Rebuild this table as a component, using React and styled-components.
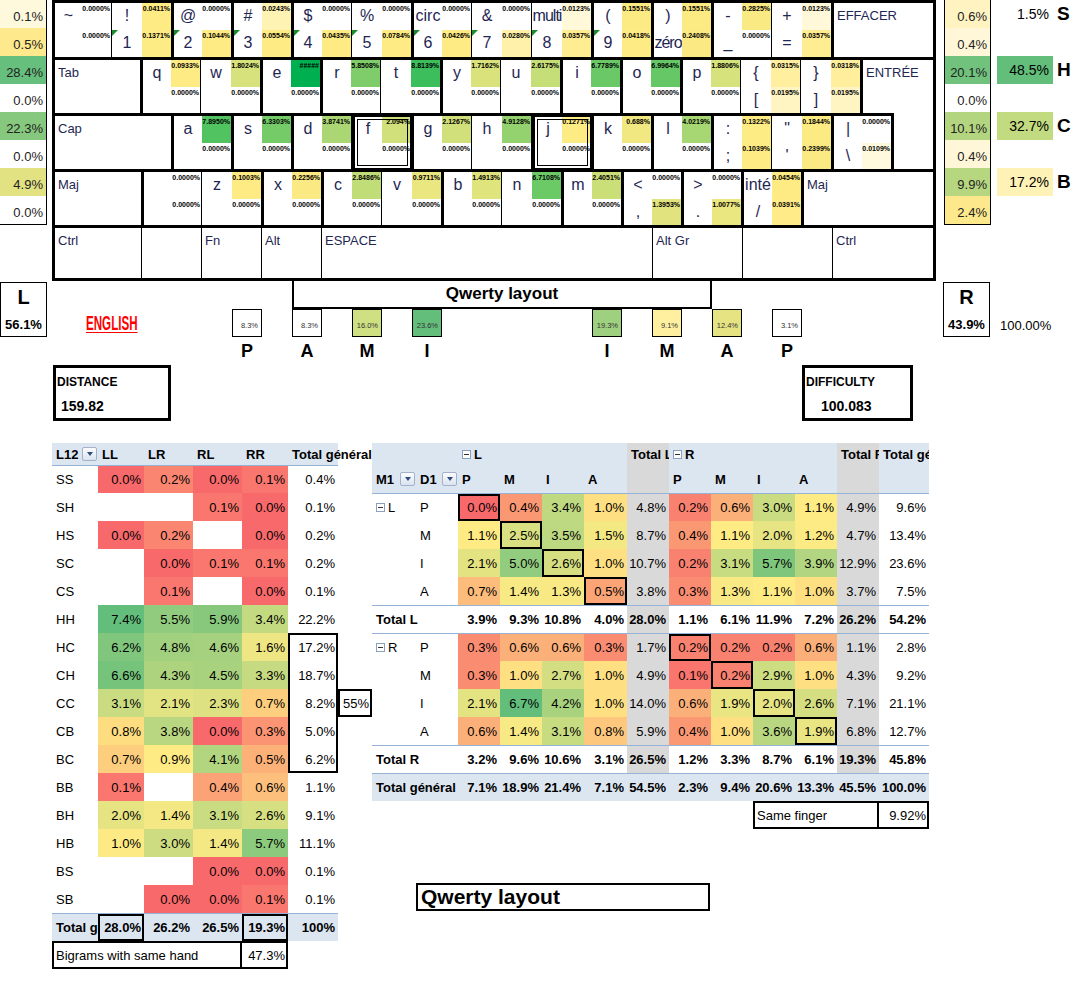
import React from 'react';
import styled, { createGlobalStyle } from 'styled-components';

const FONT = '"Liberation Sans", Arial, sans-serif';
const BAND = '#dce6f1';
const GREY = '#d9d9d9';
const INK = '#1f2753';

const GlobalStyle = createGlobalStyle`
  html, body { margin: 0; padding: 0; background: #fff; }
  body { font-family: ${FONT}; color: #000; }
  * { box-sizing: border-box; }
`;

// colour scales (same idea as the Excel conditional formats)
const mix = (a, b, t) => a.map((v, i) => Math.round(v + (b[i] - v) * t));
const rgb = (c) => `rgb(${c.join(',')})`;
const WHITE = [255, 255, 255];
const YELLOW = [255, 235, 132];
const GREEN = [99, 190, 123];
const RED = [248, 105, 107];
const DEEP = [0, 176, 80];

const keyColor = (s) => {
  if (s === '#####') return '#00b050';
  const v = parseFloat(s);
  if (!v) return '#fff';
  if (v < 0.04) return rgb(mix(WHITE, YELLOW, v / 0.04));
  return rgb(mix(YELLOW, DEEP, Math.min(1, (v - 0.04) / 11.5)));
};

const heat = (v, mid, max) => {
  if (v == null) return undefined;
  if (v <= mid) return rgb(mix(RED, YELLOW, v / mid));
  return rgb(mix(YELLOW, GREEN, Math.min(1, (v - mid) / (max - mid))));
};

const fmt = (v) => (v == null ? '' : `${v.toFixed(1)}%`);

/* ---------- keyboard data ---------- */
// [top char, bottom char, top %, bottom %, left border, options]
const ROW1 = [
  ['~', '', '0.0000%', '0.0000%', 0, { w: 56 }],
  ['!', '1', '0.0411%', '0.1371%', 1, { flag: true }],
  ['@', '2', '0.0000%', '0.1044%', 3, { flag: true }],
  ['#', '3', '0.0243%', '0.0554%', 3, { flag: true }],
  ['$', '4', '0.0000%', '0.0435%', 3, { flag: true }],
  ['%', '5', '0.0000%', '0.0784%', 1, { flag: true }],
  ['circ', '6', '0.0000%', '0.0426%', 3, { flag: true }],
  ['&', '7', '0.0000%', '0.0280%', 1, { flag: true }],
  ['multi', '8', '0.0123%', '0.0357%', 1, { flag: true, tight: true }],
  ['(', '9', '0.1551%', '0.0418%', 3, { flag: true }],
  [')', 'zéro', '0.1551%', '0.2408%', 3, { tight: true }],
  ['-', '_', '0.2825%', '0.0000%', 3],
  ['+', '=', '0.0123%', '0.0357%', 1],
];

const ROW2 = [
  ['q', '', '0.0933%', '0.0000%', 3],
  ['w', '', '1.8024%', '0.0000%', 1],
  ['e', '', '#####', '0.0000%', 3],
  ['r', '', '5.8508%', '0.0000%', 3],
  ['t', '', '8.8139%', '0.0000%', 1],
  ['y', '', '1.7162%', '0.0000%', 3],
  ['u', '', '2.6175%', '0.0000%', 1],
  ['i', '', '6.7789%', '0.0000%', 3],
  ['o', '', '6.9964%', '0.0000%', 3],
  ['p', '', '1.8806%', '0.0000%', 3],
  ['{', '[', '0.0315%', '0.0195%', 1],
  ['}', ']', '0.0318%', '0.0195%', 1],
];

const ROW3 = [
  ['a', '', '7.8950%', '0.0000%', 3],
  ['s', '', '6.3303%', '0.0000%', 3],
  ['d', '', '3.8741%', '0.0000%', 3],
  ['f', '', '2.094%', '0.0000%', 3, { home: true }],
  ['g', '', '2.1267%', '0.0000%', 3],
  ['h', '', '4.9128%', '0.0000%', 1],
  ['j', '', '0.1271%', '0.0000%', 3, { home: true }],
  ['k', '', '0.688%', '0.0000%', 3],
  ['l', '', '4.0219%', '0.0000%', 3],
  [':', ';', '0.1322%', '0.1039%', 3],
  ['"', "'", '0.1844%', '0.2399%', 1],
  ['|', '\\', '0.0000%', '0.0109%', 3],
];

const ROW4 = [
  ['', '', '0.0000%', '0.0000%', 3],
  ['z', '', '0.1003%', '0.0000%', 1],
  ['x', '', '0.2256%', '0.0000%', 3],
  ['c', '', '2.8486%', '0.0000%', 3],
  ['v', '', '0.9711%', '0.0000%', 1],
  ['b', '', '1.4913%', '0.0000%', 3],
  ['n', '', '6.7108%', '0.0000%', 1],
  ['m', '', '2.4051%', '0.0000%', 3],
  ['<', ',', '0.0000%', '1.3953%', 3],
  ['>', '.', '0.0000%', '1.0077%', 3],
  ['inté', '/', '0.0454%', '0.0391%', 3],
];

const ROW5 = [
  ['Ctrl', 86, 0],
  ['', 60, 1],
  ['Fn', 60, 1],
  ['Alt', 60, 1],
  ['ESPACE', 331, 1],
  ['Alt Gr', 90, 1],
  ['', 90, 1],
  ['Ctrl', null, 1],
];

const LEFT_SIDE = [
  ['0.1%', '#fef9dd'], ['0.5%', '#fee98c'], ['28.4%', '#66bf7c'], ['0.0%', '#fff'],
  ['22.3%', '#86c87d'], ['0.0%', '#fff'], ['4.9%', '#e2e283'], ['0.0%', '#fff'],
];
const RIGHT_SIDE = [
  ['0.6%', '#fef3c1'], ['0.4%', '#fff7d7'], ['20.1%', '#70c27c'], ['0.0%', '#fff'],
  ['10.1%', '#b4d57f'], ['0.4%', '#fff7d7'], ['9.9%', '#b7d680'], ['2.4%', '#fde98b'],
];
const FAR = [
  ['1.5%', null, 'S'], null,
  ['48.5%', '#63be7b', 'H'], null,
  ['32.7%', '#c3db80', 'C'], null,
  ['17.2%', '#fff2b6', 'B'], null,
];

const FINGERS = [
  [1, '8.3%', '#fff', 'P'], [3, '8.3%', '#fff', 'A'], [5, '16.0%', '#cfe083', 'M'], [7, '23.6%', '#63be7b', 'I'],
  [13, '19.3%', '#9fd07f', 'I'], [15, '9.1%', '#fff0a0', 'M'], [17, '12.4%', '#e6e383', 'A'], [19, '3.1%', '#fff', 'P'],
];

/* ---------- table data ---------- */
const L12 = [
  ['SS', 0.0, 0.2, 0.0, 0.1, '0.4%'],
  ['SH', null, null, 0.1, 0.0, '0.1%'],
  ['HS', 0.0, 0.2, null, 0.0, '0.2%'],
  ['SC', null, 0.0, 0.1, 0.1, '0.2%'],
  ['CS', null, 0.1, null, 0.0, '0.1%'],
  ['HH', 7.4, 5.5, 5.9, 3.4, '22.2%'],
  ['HC', 6.2, 4.8, 4.6, 1.6, '17.2%'],
  ['CH', 6.6, 4.3, 4.5, 3.3, '18.7%'],
  ['CC', 3.1, 2.1, 2.3, 0.7, '8.2%'],
  ['CB', 0.8, 3.8, 0.0, 0.3, '5.0%'],
  ['BC', 0.7, 0.9, 4.1, 0.5, '6.2%'],
  ['BB', 0.1, null, 0.4, 0.6, '1.1%'],
  ['BH', 2.0, 1.4, 3.1, 2.6, '9.1%'],
  ['HB', 1.0, 3.0, 1.4, 5.7, '11.1%'],
  ['BS', null, null, 0.0, 0.0, '0.1%'],
  ['SB', null, 0.0, 0.0, 0.1, '0.1%'],
];
const BOXED_TOTAL = ['HC', 'CH', 'CC', 'CB', 'BC'];

const M1 = [
  {
    hand: 'L',
    rows: [
      ['P', [0.0, 0.4, 3.4, 1.0], '4.8%', [0.2, 0.6, 3.0, 1.1], '4.9%', '9.6%'],
      ['M', [1.1, 2.5, 3.5, 1.5], '8.7%', [0.4, 1.1, 2.0, 1.2], '4.7%', '13.4%'],
      ['I', [2.1, 5.0, 2.6, 1.0], '10.7%', [0.2, 3.1, 5.7, 3.9], '12.9%', '23.6%'],
      ['A', [0.7, 1.4, 1.3, 0.5], '3.8%', [0.3, 1.3, 1.1, 1.0], '3.7%', '7.5%'],
    ],
    total: ['3.9%', '9.3%', '10.8%', '4.0%', '28.0%', '1.1%', '6.1%', '11.9%', '7.2%', '26.2%', '54.2%'],
  },
  {
    hand: 'R',
    rows: [
      ['P', [0.3, 0.6, 0.6, 0.3], '1.7%', [0.2, 0.2, 0.2, 0.6], '1.1%', '2.8%'],
      ['M', [0.3, 1.0, 2.7, 1.0], '4.9%', [0.1, 0.2, 2.9, 1.0], '4.3%', '9.2%'],
      ['I', [2.1, 6.7, 4.2, 1.0], '14.0%', [0.6, 1.9, 2.0, 2.6], '7.1%', '21.1%'],
      ['A', [0.6, 1.4, 3.1, 0.8], '5.9%', [0.4, 1.0, 3.6, 1.9], '6.8%', '12.7%'],
    ],
    total: ['3.2%', '9.6%', '10.6%', '3.1%', '26.5%', '1.2%', '3.3%', '8.7%', '6.1%', '19.3%', '45.8%'],
  },
];
const GRAND = ['7.1%', '18.9%', '21.4%', '7.1%', '54.5%', '2.3%', '9.4%', '20.6%', '13.3%', '45.5%', '100.0%'];

/* ---------- layout ---------- */
const Page = styled.div`
  width: 1072px;
  height: 988px;
  overflow: hidden;
`;

const Top = styled.div`
  display: flex;
  align-items: flex-start;
  height: 281px;
`;

const SideColumn = styled.div`
  width: ${(p) => p.$w}px;
  margin-left: ${(p) => p.$ml || 0}px;
  border: 1px solid #000;
  border-top: none;
  border-left-width: ${(p) => (p.$openLeft ? 0 : 1)}px;
  display: flex;
  flex-direction: column;
`;

const SideCell = styled.div`
  height: 28px;
  background: ${(p) => p.$bg};
  display: flex;
  align-items: flex-end;
  justify-content: flex-end;
  padding: 0 3px 4px 0;
  font-size: 13px;
  color: #222;
`;

const FarColumn = styled.div`
  margin-left: 6px;
  display: flex;
  flex-direction: column;
`;

const FarRow = styled.div`
  height: 28px;
  display: flex;
  align-items: center;
`;

const Score = styled.div`
  width: 56px;
  height: 28px;
  background: ${(p) => p.$bg || 'transparent'};
  display: flex;
  align-items: center;
  justify-content: flex-end;
  padding-right: 4px;
  font-size: 14px;
`;

const ScoreLetter = styled.div`
  margin-left: 4px;
  font-weight: 700;
  font-size: 19px;
`;

const Keyboard = styled.div`
  margin-left: 5px;
  width: 884px;
  border: 3px solid #000;
  display: flex;
  flex-direction: column;
`;

const KeyRow = styled.div`
  display: flex;
  height: ${(p) => p.$h}px;
`;

const Key = styled.div`
  flex: ${(p) => (p.$w ? `0 0 ${p.$w}px` : '1 1 auto')};
  display: flex;
  position: relative;
  min-width: 0;
  border-left: ${(p) => p.$bl}px solid #000;
  border-top: ${(p) => p.$bt}px solid #000;
  &::after {
    content: '';
    display: ${(p) => (p.$home ? 'block' : 'none')};
    position: absolute;
    inset: 0;
    border: 4px double #000;
    pointer-events: none;
  }
`;

const CharCol = styled.div`
  flex: 1 1 0;
  min-width: 0;
  display: flex;
  flex-direction: column;
`;

const CharCell = styled.div`
  flex: 1 1 0;
  position: relative;
  overflow: hidden;
  white-space: nowrap;
  text-align: center;
  font-size: 16px;
  line-height: 20px;
  padding-top: 3px;
  letter-spacing: ${(p) => (p.$tight ? '-1px' : 'normal')};
  color: ${INK};
  &::before {
    content: '';
    display: ${(p) => (p.$flag ? 'block' : 'none')};
    position: absolute;
    left: 0;
    top: 0;
    border-top: 6px solid #1a8c2e;
    border-right: 6px solid transparent;
  }
`;

const PctCol = styled.div`
  flex: 0 0 29px;
  display: flex;
  flex-direction: column;
`;

const PctCell = styled.div`
  flex: 1 1 0;
  background: ${(p) => p.$bg};
  font-size: 7px;
  font-weight: 700;
  line-height: 8px;
  text-align: right;
  padding: 2px 1px 0 0;
  white-space: nowrap;
  overflow: hidden;
  color: #000;
`;

const KeyLabel = styled.div`
  padding: 5px 0 0 3px;
  font-size: 13px;
  color: ${INK};
  white-space: nowrap;
`;

/* middle band */
const Middle = styled.div`
  display: grid;
  grid-template-columns: 47px 6px 118px 61px 570px 111px 30px 47px 82px;
  grid-template-rows: repeat(5, 28px);
`;

const HandBox = styled.div`
  grid-column: ${(p) => p.$col};
  grid-row: 1 / span 2;
  margin-top: 1px;
  border: 1px solid #000;
  display: flex;
  flex-direction: column;
  align-items: center;
  justify-content: space-between;
  padding: 3px 0 4px;
  font-weight: 700;
`;

const HandName = styled.div`
  font-size: 20px;
`;

const HandShare = styled.div`
  font-size: 13px;
`;

const Language = styled.div`
  grid-column: 2 / span 3;
  grid-row: 2;
  padding-left: 39px;
  display: flex;
  align-items: center;
`;

const LanguageTag = styled.span`
  display: inline-block;
  color: #ff0000;
  font-weight: 700;
  font-size: 20px;
  line-height: 20px;
  text-decoration: underline;
  text-decoration-thickness: 1px;
  text-underline-offset: 2px;
  transform: scaleX(0.58);
  transform-origin: left center;
`;

const FingerArea = styled.div`
  grid-column: 5;
  grid-row: 1 / span 3;
  display: grid;
  grid-template-columns: repeat(19, 30px);
  grid-template-rows: repeat(3, 28px);
`;

const LayoutTitle = styled.div`
  grid-column: 3 / span 14;
  grid-row: 1;
  border: 2px solid #000;
  border-top: none;
  display: flex;
  align-items: center;
  justify-content: center;
  font-weight: 700;
  font-size: 17px;
`;

const FingerBox = styled.div`
  grid-column: ${(p) => p.$col};
  grid-row: 2;
  border: 1px solid #000;
  background: ${(p) => p.$bg};
  display: flex;
  align-items: flex-end;
  justify-content: flex-end;
  padding: 0 3px 6px 0;
  font-size: 7.5px;
  color: #333;
`;

const FingerLetter = styled.div`
  grid-column: ${(p) => p.$col};
  grid-row: 3;
  display: flex;
  align-items: center;
  justify-content: center;
  font-weight: 700;
  font-size: 18px;
`;

const Metric = styled.div`
  grid-column: ${(p) => p.$col};
  grid-row: 4 / span 2;
  border: 3px solid #000;
  display: flex;
  flex-direction: column;
  font-weight: 700;
`;

const MetricName = styled.div`
  flex: 0 0 25px;
  display: flex;
  align-items: flex-end;
  padding: 0 0 4px 1px;
  font-size: 12px;
`;

const MetricValue = styled.div`
  flex: 1;
  display: flex;
  align-items: flex-end;
  padding: 0 0 4px ${(p) => p.$indent}px;
  font-size: 14px;
`;

const Total100 = styled.div`
  grid-column: 9;
  grid-row: 2;
  display: flex;
  align-items: center;
  padding: 4px 0 0 10px;
  font-size: 13px;
`;

/* bottom pivot tables */
const Bottom = styled.div`
  display: flex;
  align-items: flex-start;
  margin-top: 22px;
`;

const LeftTable = styled.div`
  margin-left: 52px;
  width: 320px;
  display: flex;
  flex-direction: column;
`;

const RightArea = styled.div`
  display: flex;
  flex-direction: column;
`;

const TRow = styled.div`
  display: grid;
  grid-template-columns: ${(p) => p.$cols};
  width: ${(p) => p.$width}px;
  height: ${(p) => p.$h || 28}px;
  background: ${(p) => (p.$band ? BAND : 'transparent')};
  border-top: ${(p) => (p.$line ? '1px solid #95b3d7' : 'none')};
`;

const edges = (p) => {
  const b = p.$b || '';
  const s = [];
  if (b.includes('t')) s.push('inset 0 2px 0 #000');
  if (b.includes('b')) s.push('inset 0 -2px 0 #000');
  if (b.includes('l')) s.push('inset 2px 0 0 #000');
  if (b.includes('r')) s.push('inset -2px 0 0 #000');
  return s.length ? s.join(', ') : 'none';
};

const Cell = styled.div`
  grid-column: ${(p) => (p.$span ? `span ${p.$span}` : 'auto')};
  display: flex;
  align-items: center;
  justify-content: ${(p) => (p.$left ? 'flex-start' : 'flex-end')};
  padding: ${(p) => (p.$left ? '0 1px 0 4px' : '0 3px 0 2px')};
  font-size: 13px;
  font-weight: ${(p) => (p.$bold ? 700 : 400)};
  background: ${(p) => p.$bg || 'transparent'};
  box-shadow: ${edges};
  white-space: nowrap;
  overflow: ${(p) => (p.$clip ? 'hidden' : 'visible')};
  min-width: 0;
`;

const DropButton = styled.span`
  display: inline-flex;
  align-items: center;
  justify-content: center;
  flex: 0 0 15px;
  width: 15px;
  height: 14px;
  margin-left: auto;
  border: 1px solid #a3b2ca;
  border-radius: 2px;
  background: linear-gradient(#fbfcfe, #dbe3ef);
  &::after {
    content: '';
    border-left: 3.5px solid transparent;
    border-right: 3.5px solid transparent;
    border-top: 4px solid #2f4a7d;
  }
`;

const Collapse = styled.span`
  display: inline-flex;
  align-items: center;
  justify-content: center;
  width: 9px;
  height: 9px;
  margin-right: 3px;
  border: 1px solid #8aa0c0;
  background: #fff;
  &::after {
    content: '';
    width: 5px;
    height: 1px;
    background: #333;
  }
`;

const BottomTitle = styled.div`
  margin: 54px 0 0 44px;
  width: 294px;
  height: 28px;
  border: 2px solid #000;
  display: flex;
  align-items: center;
  padding-left: 3px;
  font-weight: 700;
  font-size: 21px;
`;

/* ---------- pieces ---------- */
function CharKey({ k, bt }) {
  const [top, bottom, pt, pb, bl, opt = {}] = k;
  return (
    <Key $w={opt.w || 60} $bl={bl} $bt={bt} $home={opt.home}>
      <CharCol>
        <CharCell $tight={opt.tight && top.length > 3}>{top}</CharCell>
        <CharCell $flag={opt.flag} $tight={opt.tight && bottom.length > 3}>
          {bottom}
        </CharCell>
      </CharCol>
      <PctCol>
        <PctCell $bg={keyColor(pt)}>{pt}</PctCell>
        <PctCell $bg={keyColor(pb)}>{pb}</PctCell>
      </PctCol>
    </Key>
  );
}

function WideKey({ label, w, bl, bt }) {
  return (
    <Key $w={w} $bl={bl} $bt={bt}>
      <KeyLabel>{label}</KeyLabel>
    </Key>
  );
}

const LCOLS = '46px 46px 49px 49px 46px 50px 34px';
const RCOLS = '44px 42px 42px 42px 42px 43px 42px 42px 42px 42px 42px 42px 50px';

function BigramTable() {
  return (
    <LeftTable>
      <TRow $cols={LCOLS} $width={286} $h={22} $band>
        <Cell $left $bold>
          L12
          <DropButton />
        </Cell>
        {['LL', 'LR', 'RL', 'RR', 'Total général'].map((h) => (
          <Cell key={h} $left $bold>
            {h}
          </Cell>
        ))}
      </TRow>
      {L12.map((r, i) => {
        const boxed = BOXED_TOTAL.indexOf(r[0]);
        let b = '';
        if (boxed >= 0) b = 'lr' + (boxed === 0 ? 't' : '') + (boxed === BOXED_TOTAL.length - 1 ? 'b' : '');
        return (
          <TRow key={r[0]} $cols={LCOLS} $width={286} $line={i === 0}>
            <Cell $left>{r[0]}</Cell>
            {r.slice(1, 5).map((v, j) => (
              <Cell key={j} $bg={heat(v, 0.9, 7.4)}>
                {fmt(v)}
              </Cell>
            ))}
            <Cell $b={b}>{r[5]}</Cell>
            {r[0] === 'CC' && <Cell $b="tblr">55%</Cell>}
          </TRow>
        );
      })}
      <TRow $cols={LCOLS} $width={286} $band $line>
        <Cell $left $bold $clip>
          Total général
        </Cell>
        <Cell $bold $b="tblr">28.0%</Cell>
        <Cell $bold>26.2%</Cell>
        <Cell $bold>26.5%</Cell>
        <Cell $bold $b="tblr">19.3%</Cell>
        <Cell $bold>100%</Cell>
      </TRow>
      <TRow $cols={LCOLS} $width={286}>
        <Cell $left $span={4} $b="tblr">
          Bigrams with same hand
        </Cell>
        <Cell $b="tbr">47.3%</Cell>
      </TRow>
    </LeftTable>
  );
}

function FingerTable() {
  return (
    <RightArea>
      <TRow $cols={RCOLS} $width={557} $h={22} $band>
        <Cell />
        <Cell />
        <Cell $left $bold $span={4}>
          <Collapse />L
        </Cell>
        <Cell $left $bold $clip $bg={GREY}>
          Total L
        </Cell>
        <Cell $left $bold $span={4}>
          <Collapse />R
        </Cell>
        <Cell $left $bold $clip $bg={GREY}>
          Total R
        </Cell>
        <Cell $left $bold $clip>
          Total général
        </Cell>
      </TRow>
      <TRow $cols={RCOLS} $width={557} $band>
        <Cell $left $bold>
          M1
          <DropButton />
        </Cell>
        <Cell $left $bold>
          D1
          <DropButton />
        </Cell>
        {['P', 'M', 'I', 'A'].map((h) => (
          <Cell key={`l${h}`} $left $bold>
            {h}
          </Cell>
        ))}
        <Cell $bg={GREY} />
        {['P', 'M', 'I', 'A'].map((h) => (
          <Cell key={`r${h}`} $left $bold>
            {h}
          </Cell>
        ))}
        <Cell $bg={GREY} />
        <Cell />
      </TRow>
      {M1.map((block, bi) => (
        <React.Fragment key={block.hand}>
          {block.rows.map((r, ri) => (
            <TRow key={r[0]} $cols={RCOLS} $width={557} $line={ri === 0}>
              <Cell $left>
                {ri === 0 && (
                  <>
                    <Collapse />
                    {block.hand}
                  </>
                )}
              </Cell>
              <Cell $left>{r[0]}</Cell>
              {r[1].map((v, j) => (
                <Cell key={`a${j}`} $bg={heat(v, 1.1, 6.7)} $b={bi === 0 && j === ri ? 'tblr' : ''}>
                  {fmt(v)}
                </Cell>
              ))}
              <Cell $bg={GREY}>{r[2]}</Cell>
              {r[3].map((v, j) => (
                <Cell key={`b${j}`} $bg={heat(v, 1.1, 6.7)} $b={bi === 1 && j === ri ? 'tblr' : ''}>
                  {fmt(v)}
                </Cell>
              ))}
              <Cell $bg={GREY}>{r[4]}</Cell>
              <Cell>{r[5]}</Cell>
            </TRow>
          ))}
          <TRow $cols={RCOLS} $width={557} $line>
            <Cell $left $bold $span={2}>
              Total {block.hand}
            </Cell>
            {block.total.map((t, j) => (
              <Cell key={j} $bold $bg={j === 4 || j === 9 ? GREY : undefined}>
                {t}
              </Cell>
            ))}
          </TRow>
        </React.Fragment>
      ))}
      <TRow $cols={RCOLS} $width={557} $band $line>
        <Cell $left $bold $span={2}>
          Total général
        </Cell>
        {GRAND.map((t, j) => (
          <Cell key={j} $bold>
            {t}
          </Cell>
        ))}
      </TRow>
      <TRow $cols={RCOLS} $width={557}>
        <Cell $span={9} />
        <Cell $left $span={3} $b="tblr">
          Same finger
        </Cell>
        <Cell $b="tbr">9.92%</Cell>
      </TRow>
      <BottomTitle>Qwerty layout</BottomTitle>
    </RightArea>
  );
}

export default function App() {
  return (
    <>
      <GlobalStyle />
      <Page>
        <Top>
          <SideColumn $w={47} $openLeft>
            {LEFT_SIDE.map(([t, bg], i) => (
              <SideCell key={i} $bg={bg}>
                {t}
              </SideCell>
            ))}
          </SideColumn>

          <Keyboard>
            <KeyRow $h={54}>
              {ROW1.map((k, i) => (
                <CharKey key={i} k={k} bt={0} />
              ))}
              <WideKey label="EFFACER" bl={3} bt={0} />
            </KeyRow>
            <KeyRow $h={56}>
              <WideKey label="Tab" w={85} bl={0} bt={3} />
              {ROW2.map((k, i) => (
                <CharKey key={i} k={k} bt={3} />
              ))}
              <WideKey label="ENTRÉE" bl={3} bt={3} />
            </KeyRow>
            <KeyRow $h={56}>
              <WideKey label="Cap" w={116} bl={0} bt={3} />
              {ROW3.map((k, i) => (
                <CharKey key={i} k={k} bt={3} />
              ))}
              <WideKey label="" bl={3} bt={0} />
            </KeyRow>
            <KeyRow $h={56}>
              <WideKey label="Maj" w={86} bl={0} bt={3} />
              {ROW4.map((k, i) => (
                <CharKey key={i} k={k} bt={3} />
              ))}
              <WideKey label="Maj" bl={3} bt={3} />
            </KeyRow>
            <KeyRow $h={53}>
              {ROW5.map(([label, w, bl], i) => (
                <WideKey key={i} label={label} w={w} bl={bl} bt={3} />
              ))}
            </KeyRow>
          </Keyboard>

          <SideColumn $w={47} $ml={8}>
            {RIGHT_SIDE.map(([t, bg], i) => (
              <SideCell key={i} $bg={bg}>
                {t}
              </SideCell>
            ))}
          </SideColumn>

          <FarColumn>
            {FAR.map((f, i) => (
              <FarRow key={i}>
                {f && (
                  <>
                    <Score $bg={f[1]}>{f[0]}</Score>
                    <ScoreLetter>{f[2]}</ScoreLetter>
                  </>
                )}
              </FarRow>
            ))}
          </FarColumn>
        </Top>

        <Middle>
          <HandBox $col={1}>
            <HandName>L</HandName>
            <HandShare>56.1%</HandShare>
          </HandBox>
          <Language>
            <LanguageTag>ENGLISH</LanguageTag>
          </Language>
          <FingerArea>
            <LayoutTitle>Qwerty layout</LayoutTitle>
            {FINGERS.map(([col, pct, bg, letter]) => (
              <React.Fragment key={col}>
                <FingerBox $col={col} $bg={bg}>
                  {pct}
                </FingerBox>
                <FingerLetter $col={col}>{letter}</FingerLetter>
              </React.Fragment>
            ))}
          </FingerArea>
          <Metric $col={3}>
            <MetricName>DISTANCE</MetricName>
            <MetricValue $indent={5}>159.82</MetricValue>
          </Metric>
          <Metric $col={6}>
            <MetricName>DIFFICULTY</MetricName>
            <MetricValue $indent={16}>100.083</MetricValue>
          </Metric>
          <HandBox $col={8}>
            <HandName>R</HandName>
            <HandShare>43.9%</HandShare>
          </HandBox>
          <Total100>100.00%</Total100>
        </Middle>

        <Bottom>
          <BigramTable />
          <FingerTable />
        </Bottom>
      </Page>
    </>
  );
}
